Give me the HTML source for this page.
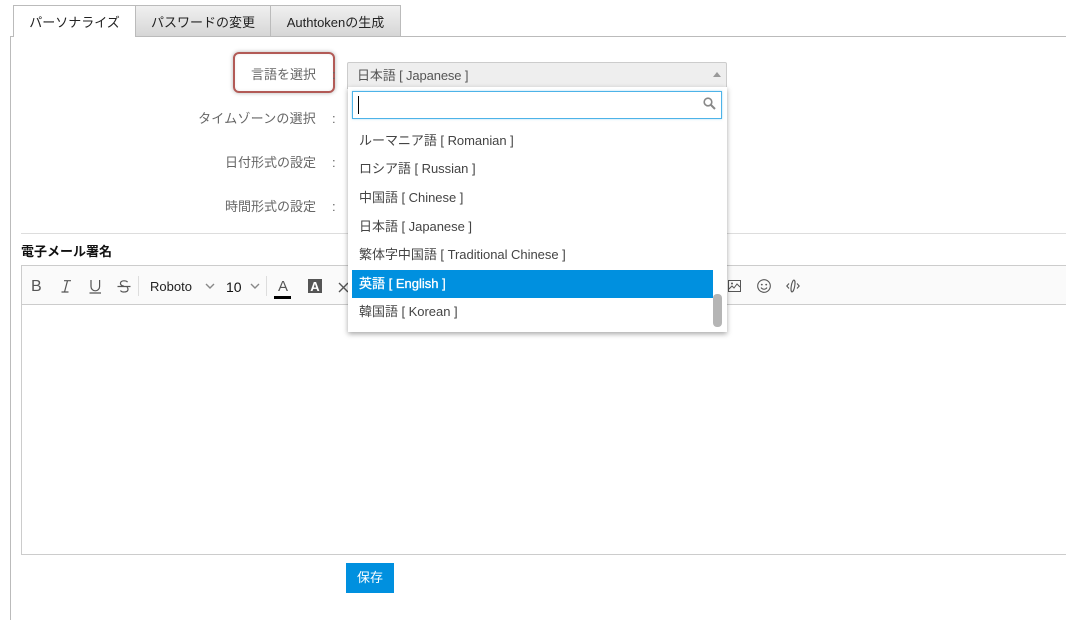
<!DOCTYPE html>
<html><head><meta charset="utf-8">
<style>
html,body{margin:0;padding:0;background:#fff;}
body{width:1066px;height:620px;position:relative;overflow:hidden;font-family:"Liberation Sans","Noto Sans CJK JP",sans-serif;color:#333;font-size:13px;}
.a{position:absolute;white-space:nowrap;}
.tab{position:absolute;top:5px;height:31px;box-sizing:border-box;border:1px solid #bbb;border-bottom:none;line-height:34px;text-align:center;background:linear-gradient(#f0f0f0,#d6d6d6);color:#222;}
.lab{position:absolute;right:750px;font-size:13px;color:#666;line-height:18px;white-space:nowrap;}
.col{position:absolute;left:332px;color:#666;line-height:18px;}
.it{position:absolute;left:359px;font-size:13px;line-height:18px;color:#444;white-space:nowrap;letter-spacing:-.03px;}
svg{position:absolute;overflow:visible;}
</style></head><body>
<div class="a" style="left:10px;top:36px;width:1px;height:584px;background:#bbb"></div>
<div class="a" style="left:10px;top:36px;width:4px;height:1px;background:#bbb"></div>
<div class="a" style="left:135px;top:36px;width:931px;height:1px;background:#bbb"></div>
<div class="tab" style="left:13px;width:123px;height:32px;background:#fff;font-size:13px;border-bottom:none;">パーソナライズ</div>
<div class="tab" style="left:135px;width:136px;font-size:13px;">パスワードの変更</div>
<div class="tab" style="left:270px;width:131px;font-size:13px;">Authtokenの生成</div>

<div class="a" style="left:233px;top:52px;width:98px;height:37px;border:2px solid #b25a56;border-radius:6px;box-shadow:0 0 4px rgba(0,0,0,.3), inset 0 0 3px rgba(0,0,0,.08);"></div>
<div class="lab" style="top:66px">言語を選択</div><div class="col" style="top:66px">:</div>
<div class="lab" style="top:110px;letter-spacing:.2px">タイムゾーンの選択</div><div class="col" style="top:110px">:</div>
<div class="lab" style="top:154px">日付形式の設定</div><div class="col" style="top:154px">:</div>
<div class="lab" style="top:198px">時間形式の設定</div><div class="col" style="top:198px">:</div>

<div class="a" style="left:21px;top:233px;width:1045px;height:1px;background:#ddd"></div>
<div class="a" style="left:21px;top:243px;font-size:13px;font-weight:bold;color:#111;line-height:18px">電子メール署名</div>

<div class="a" style="left:21px;top:265px;width:1050px;height:288px;border:1px solid #ccc;"></div>
<div class="a" style="left:22px;top:266px;width:1044px;height:38px;background:#fafafa;border-bottom:1px solid #ccc;"></div>
<div class="a" style="left:31px;top:278px;font-size:16px;line-height:18px;color:#555;">B</div>
<svg style="left:60px;top:280px" width="12" height="13"><path d="M4 .7h7M1.500 12h7M7.500 .7L4.500 12" fill="none" stroke="#555" stroke-width="1.200"/></svg>
<svg style="left:89px;top:280px" width="13" height="14"><path d="M2 0v6.500a4.300 4.300 0 0 0 8.600 0V0M.5 13h11.500" fill="none" stroke="#555" stroke-width="1.200"/></svg>
<svg style="left:117px;top:280px" width="14" height="13"><path d="M10.500 2.200C9.500 .5 4 0 3.500 3c-.3 2 1.500 2.800 3.500 3.200M3.500 10.500c1 2 7.500 2.300 7.500-1.200 0-1-.4-1.600-1-2.100M.5 6.500h13" fill="none" stroke="#555" stroke-width="1.200"/></svg>
<div class="a" style="left:138px;top:276px;width:1px;height:20px;background:#ddd"></div>
<div class="a" style="left:150px;top:278px;font-size:13px;line-height:18px;color:#222;">Roboto</div>
<svg style="left:205px;top:283px" width="10" height="6"><path d="M1 1l4 4 4-4" fill="none" stroke="#888" stroke-width="1.400"/></svg>
<div class="a" style="left:226px;top:278px;font-size:14px;line-height:18px;color:#111;">10</div>
<svg style="left:250px;top:283px" width="10" height="6"><path d="M1 1l4 4 4-4" fill="none" stroke="#888" stroke-width="1.400"/></svg>
<div class="a" style="left:266px;top:276px;width:1px;height:20px;background:#ddd"></div>
<div class="a" style="left:278px;top:278px;font-size:15px;line-height:18px;color:#555;">A</div>
<div class="a" style="left:274px;top:296px;width:17px;height:3px;background:#000"></div>
<div class="a" style="left:308px;top:279px;width:14px;height:14px;background:#555;color:#fff;font-size:13px;font-weight:bold;line-height:15px;text-align:center;">A</div>
<svg style="left:338px;top:282px" width="11" height="11"><path d="M1 1l9 9M10 1l-9 9" fill="none" stroke="#555" stroke-width="1.400"/></svg>

<svg style="left:728px;top:280px" width="13" height="12"><rect x=".5" y=".5" width="12" height="11" fill="none" stroke="#555"/><path d="M1 9l3-3 2 2 3-4 3 3" fill="none" stroke="#555"/><circle cx="4" cy="3.500" r="1" fill="#555"/></svg>
<svg style="left:757px;top:279px" width="14" height="14"><circle cx="7" cy="7" r="6.300" fill="none" stroke="#555" stroke-width="1.100"/><circle cx="4.800" cy="5.600" r=".9" fill="#555"/><circle cx="9.200" cy="5.600" r=".9" fill="#555"/><path d="M4 8.600c1.500 2.200 4.500 2.200 6 0" fill="none" stroke="#555" stroke-width="1.100"/></svg>
<svg style="left:786px;top:279px" width="14" height="14"><path d="M3 4.500L.8 7 3 9.500M11 4.500L13.200 7 11 9.500" fill="none" stroke="#555" stroke-width="1.100"/><ellipse cx="7" cy="7" rx="1.700" ry="6" transform="rotate(10 7 7)" fill="none" stroke="#555" stroke-width="1.100"/></svg>

<div class="a" style="left:346px;top:563px;width:48px;height:30px;background:#0090df;color:#fff;font-size:13px;line-height:30px;text-align:center;">保存</div>

<div class="a" style="left:347px;top:62px;width:378px;height:25px;background:#eee;border:1px solid #ccc;border-radius:2px 2px 0 0;"></div>
<div class="a" style="left:357px;top:67px;font-size:13px;line-height:18px;color:#555;letter-spacing:-.13px;">日本語 [ Japanese ]</div>
<svg style="left:713px;top:72px" width="8" height="5"><path d="M4 0L8 5H0z" fill="#999"/></svg>

<div class="a" style="left:348px;top:87px;width:379px;height:245px;background:#fff;box-shadow:0 2px 5px rgba(0,0,0,.35);"></div>
<div class="a" style="left:352px;top:91px;width:368px;height:26px;border:1px solid #4db3e8;box-shadow:0 0 2px rgba(77,179,232,.5);background:#fff;"></div>
<div class="a" style="left:358px;top:96px;width:1px;height:18px;background:#000"></div>
<svg style="left:703px;top:97px" width="13" height="13"><circle cx="5" cy="5" r="3.800" fill="none" stroke="#888" stroke-width="1.600"/><path d="M8 8l4 4" stroke="#888" stroke-width="2"/></svg>

<div class="it" style="top:132px">ルーマニア語 [ Romanian ]</div>
<div class="it" style="top:160px">ロシア語 [ Russian ]</div>
<div class="it" style="top:189px">中国語 [ Chinese ]</div>
<div class="it" style="top:218px">日本語 [ Japanese ]</div>
<div class="it" style="top:246px">繁体字中国語 [ Traditional Chinese ]</div>
<div class="a" style="left:352px;top:270px;width:361px;height:28px;background:#0090df"></div>
<div class="it" style="top:275px;color:#fff;-webkit-text-stroke:.3px #fff;letter-spacing:0;">英語 [ English ]</div>
<div class="it" style="top:303px">韓国語 [ Korean ]</div>
<div class="a" style="left:713px;top:294px;width:9px;height:33px;background:#b5b5b5;border-radius:4px;"></div>
</body></html>
